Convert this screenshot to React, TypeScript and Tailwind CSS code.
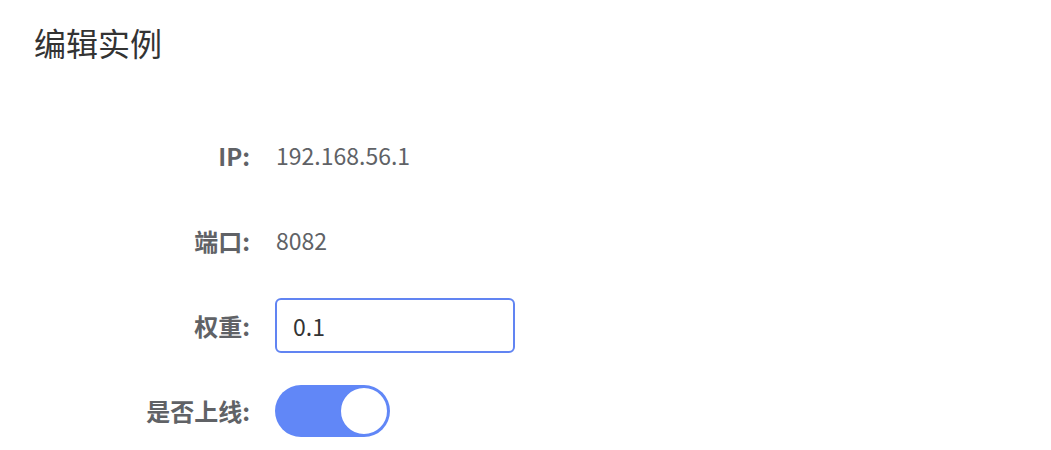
import { useState } from "react";

const font = { fontFamily: '"Noto Sans CJK SC", "Noto Sans", sans-serif' };

function Row({ label, children }: { label: string; children: React.ReactNode }) {
  return (
    <div className="flex h-[55px] items-center">
      <div className="w-[250px] shrink-0 text-right text-[24px] font-bold text-[#606266] leading-none">
        {label}
      </div>
      <div className="ml-[25px] flex items-center">{children}</div>
    </div>
  );
}

export default function App() {
  const [weight, setWeight] = useState("0.1");
  const [online, setOnline] = useState(true);

  return (
    <div style={font} className="h-[450px] w-[1051px] bg-white">
      <h1 className="pl-[34px] pt-[18px] text-[32px] leading-[48px] font-normal text-[#333]">
        编辑实例
      </h1>

      <div className="mt-[62px] flex flex-col gap-[30px]">
        <Row label="IP:">
          <span className="pl-[1px] text-[23px] text-[#606266]">192.168.56.1</span>
        </Row>
        <Row label="端口:">
          <span className="pl-[1px] text-[23px] text-[#606266]">8082</span>
        </Row>
        <Row label="权重:">
          <input
            value={weight}
            onChange={(e) => setWeight(e.target.value)}
            className="h-[55px] w-[240px] rounded-[6px] border-2 border-[#6184f2] px-[16px] text-[23px] text-[#333] outline-none"
            style={font}
          />
        </Row>
        <Row label="是否上线:">
          <button
            onClick={() => setOnline(!online)}
            className={
              "flex h-[52px] w-[115px] items-center rounded-full p-[1px] " +
              (online ? "justify-end bg-[#6187f7]" : "justify-start bg-[#dcdfe6]")
            }
          >
            <span className="block h-[50px] w-[50px] rounded-full border-2 border-[#6187f7] bg-white" />
          </button>
        </Row>
      </div>
    </div>
  );
}
